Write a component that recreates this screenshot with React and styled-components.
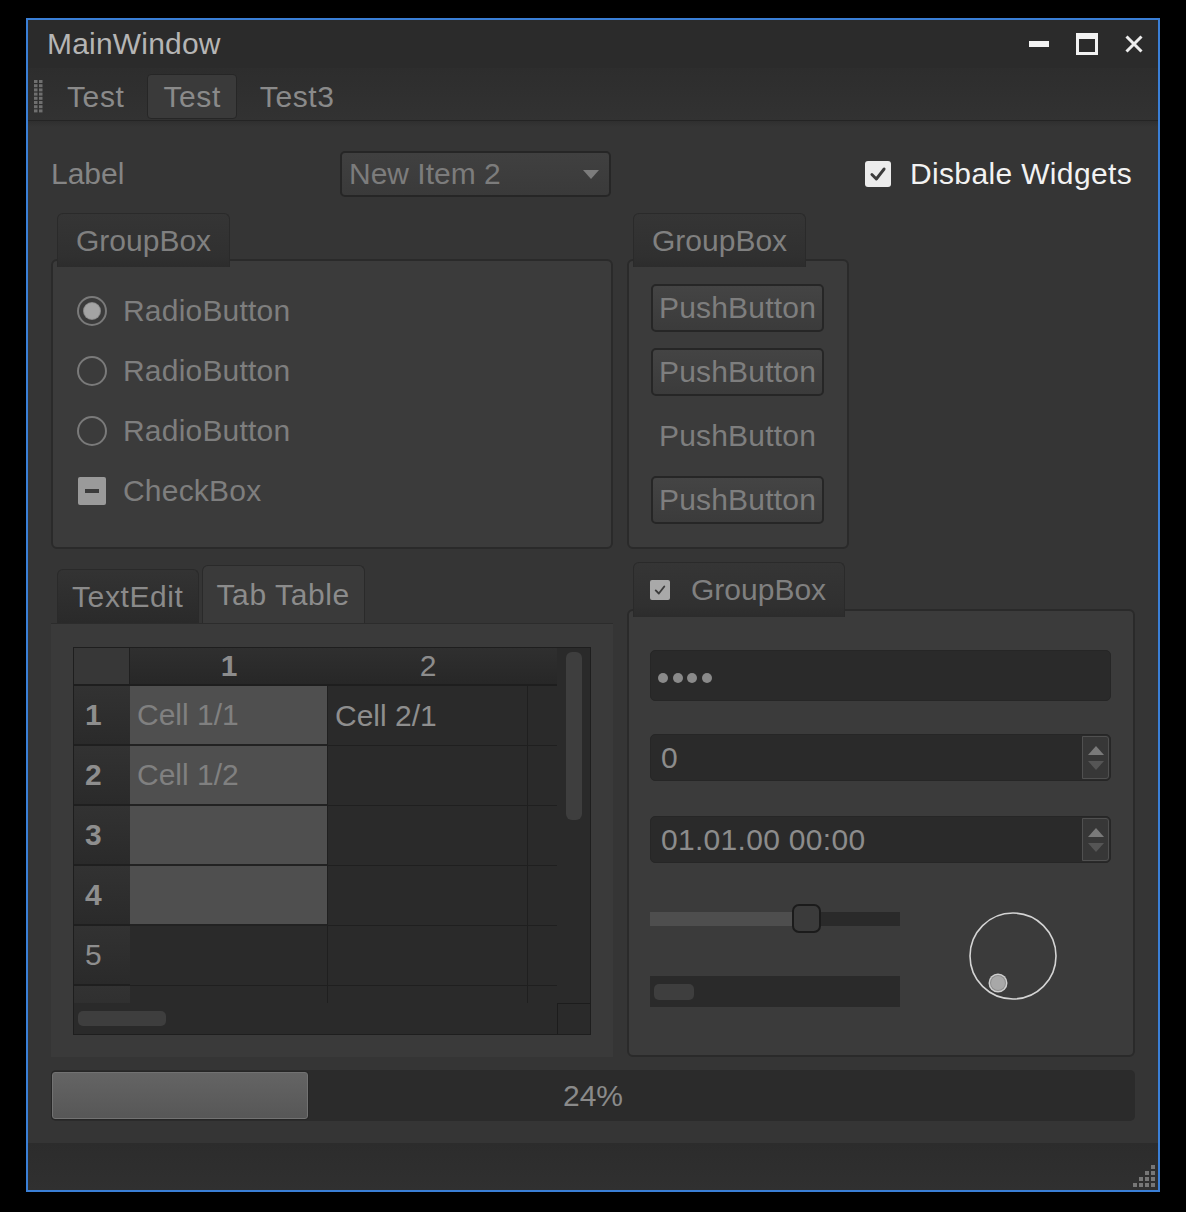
import React from 'react';
import styled, { createGlobalStyle } from 'styled-components';

const GlobalStyle = createGlobalStyle`
  *, *::before, *::after { box-sizing: border-box; }
  html, body { margin: 0; padding: 0; background: #000; }
  body { font-family: "Liberation Sans", Arial, sans-serif; }
`;

const Screen = styled.div`
  width: 1186px;
  height: 1212px;
  background: #000;
  padding: 18px 0 0 26px;
`;

const Window = styled.div`
  width: 1134px;
  height: 1174px;
  border: 2px solid #3a7fd6;
  background: #353535;
  display: flex;
  flex-direction: column;
  overflow: hidden;
`;

const TitleBar = styled.div`
  height: 48px;
  flex: none;
  background: #2b2b2b;
  display: flex;
  align-items: center;
  justify-content: space-between;
  padding: 0 15px 0 19px;
`;

const TitleText = styled.span`
  font-size: 30px;
  color: #b5b5b5;
  letter-spacing: 0.2px;
`;

const WinControls = styled.div`
  display: flex;
  align-items: center;
  gap: 27px;
`;

const ToolBar = styled.div`
  height: 53px;
  flex: none;
  display: flex;
  align-items: flex-start;
  gap: 7px;
  padding: 6px 0 0 6px;
  background: linear-gradient(#2d2d2d, #323232);
  border-bottom: 1px solid #242424;
`;

const Handle = styled.svg`
  flex: none;
  margin-top: 6px;
`;

const ToolButton = styled.div`
  height: 45px;
  padding: 0 15px;
  display: flex;
  align-items: center;
  font-size: 30px;
  letter-spacing: 0.6px;
  color: #8a8a8a;
  border: 1px solid ${(p) => (p.$active ? '#262626' : 'transparent')};
  background: ${(p) => (p.$active ? '#3a3a3a' : 'transparent')};
  border-radius: 4px;
`;

const Content = styled.div`
  flex: 1;
  display: flex;
  flex-direction: column;
  padding: 30px 23px 22px 23px;
  background: linear-gradient(#2f2f2f 0px, #353535 6px);
`;

const Row = styled.div`
  display: grid;
  grid-template-columns: 562px 508px;
  column-gap: 14px;
  height: ${(p) => p.$h}px;
  margin-top: ${(p) => p.$mt || 0}px;
  flex: none;
`;

const Cell = styled.div`
  display: flex;
  align-items: ${(p) => p.$align || 'stretch'};
  justify-content: ${(p) => p.$justify || 'flex-start'};
  padding-right: ${(p) => p.$pr || 0}px;
  min-height: 0;
`;

const PlainLabel = styled.span`
  font-size: 30px;
  color: #858585;
`;

const Combo = styled.div`
  width: 271px;
  height: 46px;
  margin-right: 2px;
  border: 2px solid #262626;
  border-radius: 5px;
  background: linear-gradient(#404040, #3a3a3a);
  display: flex;
  align-items: center;
  justify-content: space-between;
  padding: 0 10px 0 7px;
  font-size: 30px;
  color: #7c7c7c;
`;

const CheckRow = styled.div`
  display: flex;
  align-items: center;
  gap: ${(p) => p.$gap || 16}px;
  font-size: 30px;
  letter-spacing: ${(p) => p.$ls || 0}px;
  color: ${(p) => p.$color || '#7e7e7e'};
  height: ${(p) => p.$h || 60}px;
`;

const BigCheck = styled.div`
  width: 26px;
  height: 26px;
  border-radius: 3px;
  background: #ececec;
  display: flex;
  align-items: center;
  justify-content: center;
`;

const SmallCheck = styled.div`
  width: 20px;
  height: 20px;
  border-radius: 2px;
  background: #a9a9a9;
  display: flex;
  align-items: center;
  justify-content: center;
`;

const GroupBox = styled.div`
  display: flex;
  flex-direction: column;
  width: ${(p) => p.$w || '100%'};
  height: 100%;
`;

const GroupTitle = styled.div`
  align-self: flex-start;
  position: relative;
  z-index: 1;
  margin-left: 6px;
  margin-bottom: -8px;
  height: ${(p) => p.$h || 54}px;
  padding: 0 18px 0 ${(p) => p.$pl || 18}px;
  display: flex;
  align-items: center;
  gap: 21px;
  font-size: 30px;
  color: #808080;
  background: linear-gradient(#353535, #303030 80%, #2c2c2c);
  border: 1px solid #2a2a2a;
  border-bottom: none;
  border-radius: 6px 6px 0 0;
`;

const GroupFrame = styled.div`
  flex: 1;
  background: #3b3b3b;
  border: 2px solid #2a2a2a;
  border-radius: 6px;
  padding: ${(p) => p.$pad};
  display: flex;
  flex-direction: column;
  gap: ${(p) => p.$gap || 0}px;
`;

const Radio = styled.div`
  width: 30px;
  height: 30px;
  border-radius: 50%;
  border: 2px solid #7a7a7a;
  display: flex;
  align-items: center;
  justify-content: center;
  flex: none;
`;

const RadioDot = styled.div`
  width: 16px;
  height: 16px;
  border-radius: 50%;
  background: #a4a4a4;
  box-shadow: 0 0 0 1px #8a8a8a;
`;

const Partial = styled.div`
  width: 28px;
  height: 28px;
  margin: 0 1px;
  border-radius: 2px;
  background: #9a9a9a;
  display: flex;
  align-items: center;
  justify-content: center;
  flex: none;
  &::after {
    content: '';
    width: 14px;
    height: 4px;
    background: #3b3b3b;
  }
`;

const PushButton = styled.div`
  width: 173px;
  height: 48px;
  display: flex;
  align-items: center;
  justify-content: center;
  font-size: 30px;
  letter-spacing: 0.2px;
  color: #7e7e7e;
  border-radius: 5px;
  border: 2px solid ${(p) => (p.$flat ? 'transparent' : '#262626')};
  background: ${(p) => (p.$flat ? 'transparent' : 'linear-gradient(#444444, #3b3b3b)')};
`;

const TabWidget = styled.div`
  display: flex;
  flex-direction: column;
  width: 100%;
  height: 100%;
`;

const TabBar = styled.div`
  height: 61px;
  flex: none;
  display: flex;
  align-items: flex-end;
  gap: 3px;
  padding-left: 6px;
`;

const Tab = styled.div`
  height: ${(p) => (p.$active ? 58 : 54)}px;
  padding: 0 14px;
  display: flex;
  align-items: center;
  font-size: 30px;
  letter-spacing: 0.6px;
  color: ${(p) => (p.$active ? '#8c8c8c' : '#8a8a8a')};
  background: ${(p) => (p.$active ? '#3a3a3a' : 'linear-gradient(#333333, #2a2a2a)')};
  border: 1px solid #2a2a2a;
  border-bottom: none;
  border-radius: 6px 6px 0 0;
`;

const TabPane = styled.div`
  flex: 1;
  background: #3a3a3a;
  border-top: 1px solid #2c2c2c;
  padding: 23px 0 0 22px;
`;

const TableFrame = styled.div`
  width: 518px;
  height: 388px;
  border: 1px solid #1e1e1e;
  background: #2a2a2a;
  display: grid;
  grid-template-columns: 1fr 33px;
  grid-template-rows: 1fr 31px;
`;

const Viewport = styled.div`
  overflow: hidden;
  display: grid;
  grid-template-columns: 56px 198px 200px 200px;
  grid-template-rows: 38px repeat(6, 60px);
`;

const Corner = styled.div`
  background: #373737;
  border-right: 1px solid #1f1f1f;
  border-bottom: 2px solid #1e1e1e;
`;

const HeaderCell = styled.div`
  background: linear-gradient(#2f2f2f, #272727);
  border-bottom: 2px solid #1e1e1e;
  display: flex;
  align-items: center;
  justify-content: center;
  font-size: 30px;
  font-weight: ${(p) => (p.$bold ? 700 : 400)};
  color: #8c8c8c;
`;

const RowHeader = styled.div`
  background: linear-gradient(#323232, #2a2a2a);
  border-bottom: 2px solid #1f1f1f;
  display: flex;
  align-items: center;
  padding-left: 11px;
  font-size: 30px;
  font-weight: ${(p) => (p.$bold ? 700 : 400)};
  color: #8e8e8e;
`;

const DataCell = styled.div`
  background: ${(p) => (p.$sel ? '#4f4f4f' : '#2a2a2a')};
  border-right: 1px solid #1f1f1f;
  border-bottom: ${(p) => (p.$sel ? '2px solid #222222' : '1px solid #1f1f1f')};
  display: flex;
  align-items: center;
  padding-left: 7px;
  font-size: 30px;
  color: ${(p) => (p.$sel ? '#808080' : '#8e8e8e')};
  white-space: nowrap;
`;

const VScroll = styled.div`
  background: #2a2a2a;
  display: flex;
  justify-content: center;
  padding-top: 4px;
`;

const VHandle = styled.div`
  width: 16px;
  height: 168px;
  border-radius: 6px;
  background: #3e3e3e;
`;

const HScroll = styled.div`
  background: #2a2a2a;
  padding: 8px 0 0 4px;
`;

const HHandle = styled.div`
  width: ${(p) => p.$w}px;
  height: ${(p) => p.$h}px;
  border-radius: 5px;
  background: #3e3e3e;
`;

const ScrollCorner = styled.div`
  background: #2a2a2a;
  border-left: 1px solid #1c1c1c;
  border-top: 1px solid #1c1c1c;
`;

const Field = styled.div`
  height: ${(p) => p.$h}px;
  margin-top: ${(p) => p.$mt}px;
  flex: none;
  background: #2a2a2a;
  border: 1px solid #262626;
  border-radius: 5px;
  display: flex;
  align-items: center;
  justify-content: space-between;
  padding-left: ${(p) => p.$pl || 10}px;
  font-size: 30px;
  letter-spacing: 0.3px;
  color: #8c8c8c;
`;

const Dots = styled.div`
  display: flex;
  gap: 4.5px;
  margin-top: 5px;
`;

const Dot = styled.span`
  width: 10px;
  height: 10px;
  border-radius: 50%;
  background: #8a8a8a;
`;

const SpinButtons = styled.div`
  width: 27px;
  height: 43px;
  margin-right: 1px;
  border: 1px solid #505050;
  border-radius: 0 3px 3px 0;
  background: #373737;
  display: flex;
  flex-direction: column;
  align-items: center;
  justify-content: center;
  gap: 6px;
`;

const BottomArea = styled.div`
  display: flex;
  margin-top: 41px;
`;

const SliderColumn = styled.div`
  width: 250px;
  display: flex;
  flex-direction: column;
  gap: 43px;
`;

const Slider = styled.div`
  height: 29px;
  display: flex;
  align-items: center;
`;

const GrooveFill = styled.div`
  width: 142px;
  height: 14px;
  background: #4e4e4e;
`;

const GrooveRest = styled.div`
  flex: 1;
  height: 14px;
  background: #2a2a2a;
`;

const SliderHandle = styled.div`
  width: 29px;
  height: 29px;
  flex: none;
  border-radius: 7px;
  border: 2px solid #1b1b1b;
  background: #3b3b3b;
`;

const ScrollBar = styled.div`
  height: 31px;
  background: #2a2a2a;
  padding: 8px 0 0 4px;
`;

const DialWrap = styled.svg`
  margin: 6px 0 0 67px;
  flex: none;
`;

const Progress = styled.div`
  grid-column: 1 / -1;
  display: grid;
  background: #2b2b2b;
  border-radius: 5px;
  padding: 2px 1px;
  & > * { grid-area: 1 / 1; }
`;

const Chunk = styled.div`
  width: 256px;
  border: 1px solid #727272;
  border-radius: 3px;
  background: linear-gradient(#646464, #575757);
  box-shadow: 0 0 0 1px #262626;
`;

const ProgressText = styled.div`
  display: flex;
  align-items: center;
  justify-content: center;
  font-size: 30px;
  color: #8a8a8a;
`;

const StatusBar = styled.div`
  height: 47px;
  flex: none;
  background: linear-gradient(#2c2c2c, #303030);
  display: flex;
  justify-content: flex-end;
  align-items: flex-end;
  padding: 0 1px 1px 0;
`;

function HandleDots() {
  const dots = [];
  for (let r = 0; r < 8; r++) {
    for (let c = 0; c < 2; c++) {
      dots.push(<rect key={`${r}-${c}`} x={c * 5} y={r * 4.2} width="3.5" height="3" fill="#6f6f6f" />);
    }
  }
  return (
    <Handle width="10" height="33" viewBox="0 0 10 33">
      {dots}
    </Handle>
  );
}

function SizeGrip() {
  const dots = [];
  for (let r = 0; r < 4; r++) {
    for (let c = 3 - r; c < 4; c++) {
      dots.push(<rect key={`${r}-${c}`} x={c * 6} y={r * 6} width="4" height="4" fill="#777" />);
    }
  }
  return (
    <svg width="24" height="24" viewBox="0 0 24 24">
      {dots}
    </svg>
  );
}

const CheckMark = ({ size = 18, color = '#3a3a3a', w = 2.6 }) => (
  <svg width={size} height={size} viewBox="0 0 18 18">
    <path d="M3.5 9.5 L7.5 13.5 L14.5 4.5" fill="none" stroke={color} strokeWidth={w} strokeLinecap="round" strokeLinejoin="round" />
  </svg>
);

const rows = [
  { n: '1', bold: true, c1: 'Cell 1/1', c2: 'Cell 2/1', sel: true },
  { n: '2', bold: true, c1: 'Cell 1/2', c2: '', sel: true },
  { n: '3', bold: true, c1: '', c2: '', sel: true },
  { n: '4', bold: true, c1: '', c2: '', sel: true },
  { n: '5', bold: false, c1: '', c2: '', sel: false },
  { n: '', bold: false, c1: '', c2: '', sel: false },
];

export default function App() {
  return (
    <>
      <GlobalStyle />
      <Screen>
        <Window>
          <TitleBar>
            <TitleText>MainWindow</TitleText>
            <WinControls>
              <svg width="20" height="6" viewBox="0 0 20 6">
                <rect x="0" y="0" width="20" height="6" fill="#f2f2f2" />
              </svg>
              <svg width="22" height="22" viewBox="0 0 22 22">
                <path d="M0 0H22V22H0Z M3 6V19H19V6Z" fill="#f2f2f2" fillRule="evenodd" />
              </svg>
              <svg width="18" height="18" viewBox="0 0 18 18">
                <path d="M1.5 1.5L16.5 16.5M16.5 1.5L1.5 16.5" stroke="#ededed" strokeWidth="3" />
              </svg>
            </WinControls>
          </TitleBar>

          <ToolBar>
            <HandleDots />
            <ToolButton>Test</ToolButton>
            <ToolButton $active>Test</ToolButton>
            <ToolButton>Test3</ToolButton>
          </ToolBar>

          <Content>
            <Row $h={46}>
              <Cell $align="center" $justify="space-between">
                <PlainLabel>Label</PlainLabel>
                <Combo>
                  <span>New Item 2</span>
                  <svg width="16" height="9" viewBox="0 0 16 9">
                    <path d="M0 0H16L8 9Z" fill="#7c7c7c" />
                  </svg>
                </Combo>
              </Cell>
              <Cell $align="center" $justify="flex-end" $pr={3}>
                <CheckRow $gap={19} $color="#f2f2f2" $h={46} $ls={0.35}>
                  <BigCheck>
                    <CheckMark size={20} color="#3c3c3c" w={2.6} />
                  </BigCheck>
                  Disbale Widgets
                </CheckRow>
              </Cell>
            </Row>

            <Row $h={336} $mt={16}>
              <Cell>
                <GroupBox>
                  <GroupTitle>GroupBox</GroupTitle>
                  <GroupFrame $pad="20px 0 0 24px">
                    <CheckRow $ls={0.2}>
                      <Radio>
                        <RadioDot />
                      </Radio>
                      RadioButton
                    </CheckRow>
                    <CheckRow $ls={0.2}>
                      <Radio />
                      RadioButton
                    </CheckRow>
                    <CheckRow $ls={0.2}>
                      <Radio />
                      RadioButton
                    </CheckRow>
                    <CheckRow $ls={0.2}>
                      <Partial />
                      CheckBox
                    </CheckRow>
                  </GroupFrame>
                </GroupBox>
              </Cell>
              <Cell>
                <GroupBox $w="222px">
                  <GroupTitle>GroupBox</GroupTitle>
                  <GroupFrame $pad="23px 0 0 22px" $gap={16}>
                    <PushButton>PushButton</PushButton>
                    <PushButton>PushButton</PushButton>
                    <PushButton $flat>PushButton</PushButton>
                    <PushButton>PushButton</PushButton>
                  </GroupFrame>
                </GroupBox>
              </Cell>
            </Row>

            <Row $h={495} $mt={13}>
              <Cell>
                <TabWidget>
                  <TabBar>
                    <Tab>TextEdit</Tab>
                    <Tab $active>Tab Table</Tab>
                  </TabBar>
                  <TabPane>
                    <TableFrame>
                      <Viewport>
                        <Corner />
                        <HeaderCell $bold>1</HeaderCell>
                        <HeaderCell>2</HeaderCell>
                        <HeaderCell />
                        {rows.map((r, i) => (
                          <React.Fragment key={i}>
                            <RowHeader $bold={r.bold}>{r.n}</RowHeader>
                            <DataCell $sel={r.sel}>{r.c1}</DataCell>
                            <DataCell>{r.c2}</DataCell>
                            <DataCell />
                          </React.Fragment>
                        ))}
                      </Viewport>
                      <VScroll>
                        <VHandle />
                      </VScroll>
                      <HScroll>
                        <HHandle $w={88} $h={15} />
                      </HScroll>
                      <ScrollCorner />
                    </TableFrame>
                  </TabPane>
                </TabWidget>
              </Cell>
              <Cell>
                <GroupBox>
                  <GroupTitle $h={55} $pl={16}>
                    <SmallCheck>
                      <CheckMark size={14} color="#3c3c3c" w={2.4} />
                    </SmallCheck>
                    GroupBox
                  </GroupTitle>
                  <GroupFrame $pad="0 22px 0 21px">
                    <Field $h={51} $mt={39} $pl={7}>
                      <Dots>
                        <Dot />
                        <Dot />
                        <Dot />
                        <Dot />
                      </Dots>
                    </Field>
                    <Field $h={47} $mt={33}>
                      <span>0</span>
                      <SpinButtons>
                        <svg width="16" height="9" viewBox="0 0 16 9">
                          <path d="M8 0L16 9H0Z" fill="#7a7a7a" />
                        </svg>
                        <svg width="16" height="9" viewBox="0 0 16 9">
                          <path d="M0 0H16L8 9Z" fill="#555555" />
                        </svg>
                      </SpinButtons>
                    </Field>
                    <Field $h={47} $mt={35}>
                      <span>01.01.00 00:00</span>
                      <SpinButtons>
                        <svg width="16" height="9" viewBox="0 0 16 9">
                          <path d="M8 0L16 9H0Z" fill="#7a7a7a" />
                        </svg>
                        <svg width="16" height="9" viewBox="0 0 16 9">
                          <path d="M0 0H16L8 9Z" fill="#555555" />
                        </svg>
                      </SpinButtons>
                    </Field>
                    <BottomArea>
                      <SliderColumn>
                        <Slider>
                          <GrooveFill />
                          <SliderHandle />
                          <GrooveRest />
                        </Slider>
                        <ScrollBar>
                          <HHandle $w={40} $h={16} />
                        </ScrollBar>
                      </SliderColumn>
                      <DialWrap width="92" height="92" viewBox="0 0 92 92">
                        <circle cx="46" cy="46" r="43" fill="none" stroke="#d4d4d4" strokeWidth="1.6" />
                        <circle cx="31" cy="73" r="9.5" fill="#cfcfcf" />
                        <circle cx="31" cy="73" r="8" fill="#8d8d8d" />
                        <circle cx="31" cy="73" r="7" fill="#a8a8a8" />
                      </DialWrap>
                    </BottomArea>
                  </GroupFrame>
                </GroupBox>
              </Cell>
            </Row>

            <Row $h={51} $mt={13}>
              <Progress>
                <Chunk />
                <ProgressText>24%</ProgressText>
              </Progress>
            </Row>
          </Content>

          <StatusBar>
            <SizeGrip />
          </StatusBar>
        </Window>
      </Screen>
    </>
  );
}
